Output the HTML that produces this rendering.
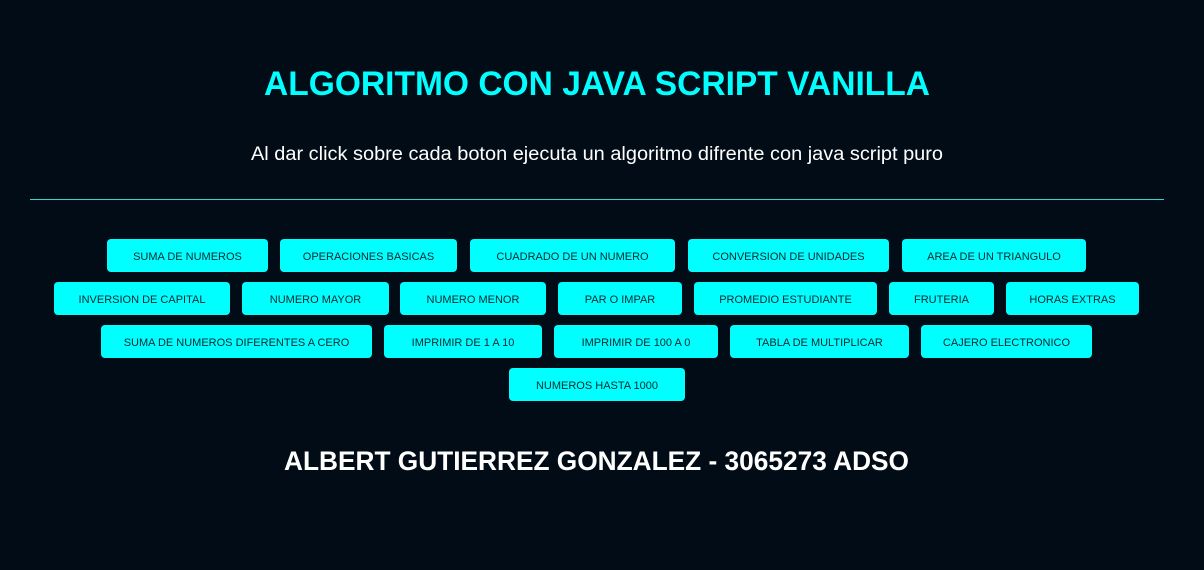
<!DOCTYPE html>
<html><head><meta charset="utf-8"><style>
html,body{margin:0;padding:0;background:#010c16;width:1204px;height:570px;overflow:hidden}
svg{display:block}
</style></head><body>
<svg width="1204" height="570" xmlns="http://www.w3.org/2000/svg" font-family="Liberation Sans, sans-serif">
<rect width="1204" height="570" fill="#010c16"/>
<text x="264" y="95" font-size="34" font-weight="bold" fill="#00ffff" textLength="666" lengthAdjust="spacingAndGlyphs">ALGORITMO CON JAVA SCRIPT VANILLA</text>
<text x="251" y="160" font-size="19" fill="#ffffff" textLength="692" lengthAdjust="spacingAndGlyphs">Al dar click sobre cada boton ejecuta un algoritmo difrente con java script puro</text>
<rect x="30" y="199" width="1134" height="1" fill="#2fd6d6"/>
<g fill="#00ffff">
<rect x="107" y="239" width="161" height="33" rx="4"/>
<rect x="280" y="239" width="177" height="33" rx="4"/>
<rect x="470" y="239" width="205" height="33" rx="4"/>
<rect x="688" y="239" width="201" height="33" rx="4"/>
<rect x="902" y="239" width="184" height="33" rx="4"/>
<rect x="54" y="282" width="176" height="33" rx="4"/>
<rect x="242" y="282" width="147" height="33" rx="4"/>
<rect x="400" y="282" width="146" height="33" rx="4"/>
<rect x="558" y="282" width="124" height="33" rx="4"/>
<rect x="694" y="282" width="183" height="33" rx="4"/>
<rect x="889" y="282" width="105" height="33" rx="4"/>
<rect x="1006" y="282" width="133" height="33" rx="4"/>
<rect x="101" y="325" width="271" height="33" rx="4"/>
<rect x="384" y="325" width="158" height="33" rx="4"/>
<rect x="554" y="325" width="164" height="33" rx="4"/>
<rect x="730" y="325" width="179" height="33" rx="4"/>
<rect x="921" y="325" width="171" height="33" rx="4"/>
<rect x="509" y="368" width="176" height="33" rx="4"/>
</g>
<g font-size="11" fill="#0a2a30" text-anchor="middle">
<text x="187.5" y="260">SUMA DE NUMEROS</text>
<text x="368.5" y="260">OPERACIONES BASICAS</text>
<text x="572.5" y="260">CUADRADO DE UN NUMERO</text>
<text x="788.5" y="260">CONVERSION DE UNIDADES</text>
<text x="994" y="260">AREA DE UN TRIANGULO</text>
<text x="142" y="303">INVERSION DE CAPITAL</text>
<text x="315.5" y="303">NUMERO MAYOR</text>
<text x="473" y="303">NUMERO MENOR</text>
<text x="620" y="303">PAR O IMPAR</text>
<text x="785.5" y="303">PROMEDIO ESTUDIANTE</text>
<text x="941.5" y="303">FRUTERIA</text>
<text x="1072.5" y="303">HORAS EXTRAS</text>
<text x="236.5" y="346">SUMA DE NUMEROS DIFERENTES A CERO</text>
<text x="463" y="346">IMPRIMIR DE 1 A 10</text>
<text x="636" y="346">IMPRIMIR DE 100 A 0</text>
<text x="819.5" y="346">TABLA DE MULTIPLICAR</text>
<text x="1006.5" y="346">CAJERO ELECTRONICO</text>
<text x="597" y="389">NUMEROS HASTA 1000</text>
</g>
<text x="284" y="470" font-size="27" font-weight="bold" fill="#ffffff" textLength="625" lengthAdjust="spacingAndGlyphs">ALBERT GUTIERREZ GONZALEZ - 3065273 ADSO</text>
</svg>
</body></html>
